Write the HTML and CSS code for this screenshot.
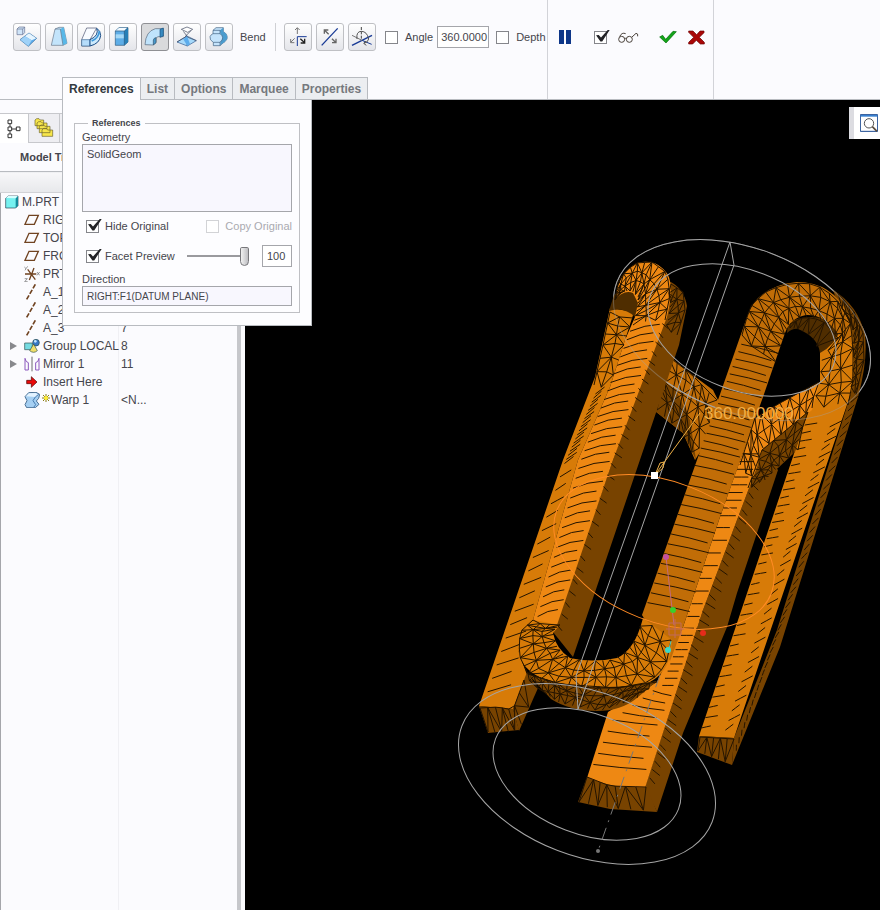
FILE: index.html
```html
<!DOCTYPE html>
<html lang="en">
<head>
<meta charset="utf-8">
<title>Warp – M.PRT</title>
<link rel="stylesheet" href="styles.css">
</head>
<body>
<header class="ribbon">
  <div class="dash">
    <div class="tools">
      <button class="tool" aria-label="Transform"><svg viewBox="0 0 84 84"><path d="M12 18l6-6h17v17l-6 6H12z" fill="#cfe4f8" stroke="#667090" stroke-width="2"/><path d="M12 18h17v17M29 18l6-6" fill="none" stroke="#667090" stroke-width="2"/><path d="M21 50l27-20 23 16-25 24z" fill="#5cacec" stroke="#336a9c" stroke-width="2"/><path d="M48 31l22 15-14 6-20-12z" fill="#e6f5ff"/><path d="M22 50l14-10 20 12-10 17z" fill="#9fd2f8"/></svg></button>
      <button class="tool" aria-label="Warp"><svg viewBox="0 0 84 84"><path d="M19 67l11-49 12-5h14l10 48-12 6z" fill="#c3e4fb" stroke="#657488" stroke-width="2"/><path d="M46 18l10-5 10 48-12 6z" fill="#58b8e8"/><path d="M30 18h16l8 49" fill="none" stroke="#657488" stroke-width="2"/></svg></button>
      <button class="tool" aria-label="Spine"><svg viewBox="0 0 84 84"><path d="M14 50l15-35h30l-20 35v19H14z" fill="#f8fbff" stroke="#454d6b" stroke-width="2"/><path d="M14 50h25v19H14z" fill="#b5dcfa" stroke="#3d6693" stroke-width="2"/><path d="M39 50q28-12 20-34 12 6 12 22-3 24-32 31z" fill="#cdeafc" stroke="#184b86" stroke-width="3"/><path d="M44 54q22-9 23-30" stroke="#3a96da" stroke-width="5" fill="none"/></svg></button>
      <button class="tool" aria-label="Stretch"><svg viewBox="0 0 84 84"><path d="M19 24l11-10h27v43L46 67H19z" fill="#5dade7" stroke="#28577d" stroke-width="2"/><path d="M20 23l10-8h25l-9 9z" fill="#f3faff"/><path d="M20 34h26v12H20z" fill="#a5d9f7"/><path d="M46 24l11-10v43L46 67z" fill="#267fb7"/><path d="M19 24h27v43M46 24l11-10" fill="none" stroke="#28577d" stroke-width="2"/></svg></button>
      <button class="tool pressed" aria-label="Bend"><svg viewBox="0 0 84 84"><path d="M12 65q2-40 31-48h24v24H51l-6 4v14l-9 7z" fill="#bfe3fb" stroke="#536477" stroke-width="2"/><path d="M57 19l10-4v24l-10 4z" fill="#388bc1" stroke="#16507f" stroke-width="2"/><path d="M37 66V51q2-7 8-7v15z" fill="#4699cb" stroke="#31516b" stroke-width="2"/></svg></button>
      <button class="tool" aria-label="Twist"><svg viewBox="0 0 84 84"><path d="M12 57l30-18 28 14-27 16z" fill="#a6d9fa" stroke="#31588e" stroke-width="2"/><path d="M25 19l17-7 17 7-15 9z" fill="#fff" stroke="#3d455e" stroke-width="2"/><path d="M31 25l13 17M54 23L38 39M42 42l28 11M42 39L12 57M38 39l5 30" fill="none" stroke="#3d455e" stroke-width="2"/><path d="M31 49l11-10 9 24-8 6z" fill="#5cacec"/></svg></button>
      <button class="tool" aria-label="Sculpt"><svg viewBox="0 0 84 84"><path d="M24 22l9-8h22v12q14 7 11 22-6 10-12 12l-9 8H25V58q-12-7-10-17 3-7 9-9z" fill="#c4e3fb" stroke="#3d5d7e" stroke-width="2"/><path d="M45 22l10-8v12q14 7 11 22-7 10-12 12l-8 7V56q14-13 0-24z" fill="#4b9cce"/><path d="M24 22h21v10q16 12 0 26v10M24 32h21M25 58h20" fill="none" stroke="#3d5d7e" stroke-width="2"/></svg></button>
      <span class="mode">Bend</span>
      <span class="rule"></span>
      <button class="tool" aria-label="Start frame"><svg viewBox="0 0 84 84" fill="none" stroke-width="3"><path d="M40 33V15M33 21l7-7 7 7M32 46L20 58M20 48v11h11" stroke="#777"/><path d="M40 69V41h28" stroke="#173995"/><path d="M49 47l13 12M62 47v13H50" stroke="#222" stroke-width="4"/></svg></button>
      <button class="tool" aria-label="Reverse direction"><svg viewBox="0 0 84 84" fill="none"><path d="M17 67L65 16" stroke="#173995" stroke-width="4"/><path d="M38 34L25 21M25 32V21h12M48 47l12 12M60 47v12H48" stroke="#666" stroke-width="4"/></svg></button>
      <button class="tool" aria-label="Rotate axis"><svg viewBox="0 0 84 84" fill="none"><path d="M12 67l60-30" stroke="#173995" stroke-width="4"/><path d="M12 37l30 15" stroke="#777" stroke-width="3"/><path d="M42 52l29 12" stroke="#173995" stroke-width="3"/><path d="M40 12v38" stroke="#444" stroke-width="3" stroke-dasharray="9 4"/><path d="M27 48q-3-23 13-23 17 0 22 23-3 11-14 13M54 54l-7 7 8 6" stroke="#555" stroke-width="3"/></svg></button>
      <label class="opt angle"><input type="checkbox" class="tick"><span>Angle</span></label>
      <input class="num" type="text" value="360.0000" aria-label="Angle value">
      <label class="opt depth"><input type="checkbox" class="tick"><span>Depth</span></label>
    </div>
    <nav class="tabs" aria-label="Dashboard">
      <button class="tab current">References</button><button class="tab">List</button><button class="tab">Options</button><button class="tab">Marquee</button><button class="tab">Properties</button>
    </nav>
  </div>
  <div class="finish">
    <button class="plain pause" aria-label="Pause"><svg width="12" height="14" viewBox="0 0 12 14"><path d="M0 0h5v14H0zM7 0h5v14H7z" fill="#0d3688"/></svg></button>
    <label class="opt preview"><input type="checkbox" class="tick" checked aria-label="Preview"><svg width="21" height="13" viewBox="0 0 63 39" fill="none" stroke="#49413a" stroke-width="3"><circle cx="11" cy="25" r="9"/><circle cx="34" cy="25" r="9"/><path d="M20 24q3-4 5 0M5 17q6-14 18-9M42 18L54 7q7 0 5 9"/></svg></label>
    <button class="plain accept" aria-label="Accept"><svg width="18" height="14" viewBox="0 0 54 42"><path d="M2 21l9-5 9 12L42 4l10 1-31 34z" fill="#13a519" stroke="#056b0b" stroke-width="2"/></svg></button>
    <button class="plain" aria-label="Cancel"><svg width="17" height="15" viewBox="0 0 51 45"><path d="M2 3h13l11 11L36 3h12v5L34 22l15 15v5H37L25 31 14 42H2v-5l15-15L2 7z" fill="#a90707" stroke="#690202" stroke-width="2"/></svg></button>
  </div>
  <div class="spare"></div>
</header>

<main class="work">
  <aside class="side">
    <div class="side-tabs">
      <button class="side-tab on" aria-label="Model tree"><svg width="14" height="20" viewBox="0 0 42 60" fill="none" stroke="#333" stroke-width="3"><path d="M3 3h11v11H3zM3 24h11v11H3zM3 45h11v11H3zM28 24h11v11H28zM9 14v10M9 35v10M14 30h14"/></svg></button>
      <button class="side-tab" aria-label="Folders"><svg width="20" height="20" viewBox="0 0 60 60" fill="#f7e64a" stroke="#69602a" stroke-width="2"><path d="M3 23V6l5-4h7l4 4h10v17zM9 32V15l5-4h7l4 4h14v17zM16 44V25l5-4h8l4 4h15v19zM24 55V36l5-5h8l4 5h15v19z"/></svg></button>
      <button class="side-tab" aria-label="Favorites"></button>
    </div>
    <h2 class="side-title">Model Tree</h2>
    <table class="tree">
      <thead><tr><th></th><th></th></tr></thead>
      <tbody>
        <tr><td><div class="node root"><svg class="ic" viewBox="0 0 48 48"><path d="M5 13l7-7h30v29l-7 7H5z" fill="#76f1f0" stroke="#263f52" stroke-width="2"/><path d="M35 13l7-7v29l-7 7z" fill="#148b9c"/><path d="M6 12l6-6h29l-6 7z" fill="#d5ffff"/></svg>M.PRT</div></td><td></td></tr>
        <tr><td><div class="node"><svg class="ic" viewBox="0 0 48 48"><path d="M3 37L15 10h28L31 37z" fill="none" stroke="#704321" stroke-width="4"/></svg>RIGHT</div></td><td></td></tr>
        <tr><td><div class="node"><svg class="ic" viewBox="0 0 48 48"><path d="M3 37L15 10h28L31 37z" fill="none" stroke="#704321" stroke-width="4"/></svg>TOP</div></td><td></td></tr>
        <tr><td><div class="node"><svg class="ic" viewBox="0 0 48 48"><path d="M3 37L15 10h28L31 37z" fill="none" stroke="#704321" stroke-width="4"/></svg>FRONT</div></td><td></td></tr>
        <tr><td><div class="node"><svg class="ic" viewBox="0 0 48 48" fill="none" stroke="#704321" stroke-width="4"><path d="M3 24h34M11 10l23 31M30 6L16 42"/><path d="M1 3l5 5 5-7M6 8l-3 5M2 38h8l-8 9h9M39 18l8 10M47 18l-8 10" stroke="#666" stroke-width="2"/></svg>PRT</div></td><td></td></tr>
        <tr><td><div class="node"><svg class="ic" viewBox="0 0 48 48"><path d="M8 46L34 1" stroke="#704321" stroke-width="5" stroke-dasharray="14 5"/></svg>A_1</div></td><td></td></tr>
        <tr><td><div class="node"><svg class="ic" viewBox="0 0 48 48"><path d="M8 46L34 1" stroke="#704321" stroke-width="5" stroke-dasharray="14 5"/></svg>A_2</div></td><td></td></tr>
        <tr><td><div class="node"><svg class="ic" viewBox="0 0 48 48"><path d="M8 46L34 1" stroke="#704321" stroke-width="5" stroke-dasharray="14 5"/></svg>A_3</div></td><td>7</td></tr>
        <tr><td><div class="node parent"><svg class="ic" viewBox="0 0 48 48" stroke="#2d4e4b" stroke-width="2"><path d="M2 15h23v20H2z" fill="#76dce2"/><circle cx="36" cy="14" r="10" fill="#3778c7"/><circle cx="34" cy="10" r="4" fill="#c4e7ff" stroke="none"/><path d="M17 38l12-20 11 20q-11 10-23 0z" fill="#f0df69"/></svg>Group LOCAL</div></td><td>8</td></tr>
        <tr><td><div class="node parent"><svg class="ic" viewBox="0 0 48 48" fill="none" stroke="#8b58bd" stroke-width="3"><path d="M3 42V7q2 12 10 13v22zM45 42V7q-2 12-10 13v22z"/><path d="M24 2v44" stroke="#222" stroke-width="2"/></svg>Mirror 1</div></td><td>11</td></tr>
        <tr><td><div class="node"><svg class="ic" viewBox="0 0 48 48"><path d="M8 19h14V8l17 16-17 16V29H8z" fill="#e90909" stroke="#4a0000" stroke-width="2"/></svg>Insert Here</div></td><td></td></tr>
        <tr><td><div class="node"><svg class="ic" viewBox="0 0 48 48"><path d="M3 14L14 2l22-1 11 6-3 12-7 8 8 10-11 10H8l-5-9 6-12z" fill="#a5cff2" stroke="#4c7195" stroke-width="3"/><path d="M6 13l9-9 20-1 8 5-9 7z" fill="#e3f3ff"/><path d="M34 15l-7 11 8 12-6 8M34 15l10-8" fill="none" stroke="#467bb0" stroke-width="3"/></svg><svg class="star" viewBox="0 0 24 24"><path d="M12 0v24M0 12h24M3 3l18 18M21 3L3 21" stroke="#8a7b10" stroke-width="3"/><circle cx="12" cy="12" r="6" fill="#ffee35"/></svg>Warp 1</div></td><td>&lt;N...</td></tr>
      </tbody>
    </table>
  </aside>

  <section class="canvas" aria-label="Graphics">
    <svg class="model" viewBox="245 100 635 810" preserveAspectRatio="xMinYMin slice">
      <!-- back links between the loops -->
      <path class="f3" d="M655 345L690 373 713 390 719 402 708 440 695 460 683 433 655 411z"/>
      <path class="f4" d="M658 380L676 390 690 420 696 460 683 433 655 411z"/>
      <g id="back-lines"></g>
      <ellipse class="wire" cx="742" cy="330" rx="134" ry="82" transform="rotate(21 742 330)"/>
      <!-- right loop -->
      <path class="f4" d="M833 290Q858 305 865 335 868 360 858 397L780 647 732 765 734 738 777 630 852 390 854 350z"/>
      <path class="f5" d="M788 323Q806 312 832 321L853 363 820 377 820 353Q818 337 798 329 793 328 787 333z"/>
      <path class="f2" d="M840 312Q854 338 854 363L852 390 734 738 699 736 808 412 820 382 820 353Q835 345 840 330z"/>
      <path class="f1" d="M820 382L780 403 755 418 732 490 747 488 762 450 780 436 812 410z"/>
      <path class="f4" d="M808 412L762 450 747 490 757 484 778 468 795 452z"/>
      <path class="f4" d="M699 736L734 738 732 765 697 752z"/>
      <!-- left loop -->
      <path class="f4" d="M669 281Q684 288 687 306L679 345 573 657 553 632 613 460 668 302z"/>
      <path class="f2" d="M610 308L634 312 625 340 610 387 578 460 533 620 518 650 527 675 513 709 479 706 563 460 595 377z"/>
      <path class="f5" d="M609 311L614 295 625 288 638 294 640 303 635 317Q624 306 609 311z"/>
      <path class="f1" d="M615 300Q618 273 637 263 657 258 668 275 674 287 667 317L613 460 557 625 518 650 533 620 578 460 610 387 625 340 635 317 638 303 633 293Q624 289 615 300z"/>
      <path class="f4" d="M513 709L527 672 538 688 519 731z"/>
      <path class="f4" d="M479 706L513 709 519 730 488 733z"/>
      <!-- centre bar -->
      <path class="f4" d="M762 450L778 470 737 593 727 627 683 733 657 812 645 787 703 610 757 467z"/>
      <path class="f1" d="M755 418L762 450 757 467 703 610 645 788 610 787 587 778 608 712 657 682 683 627 720 517z"/>
      <path class="f3" d="M747 317Q757 286 797 282 832 282 848 314L854 345 838 334Q825 314 806 315 790 318 785 333L763 397 720 517 683 627 670 661 642 615 697 460z"/>
      <path class="f4" d="M587 777Q610 789 647 787L657 812 610 809 578 802z"/>
      <!-- lower loop -->
      <path class="f4" d="M528 674L560 684 617 688 657 681 637 698Q621 711 597 711 570 711 551 699z"/>
      <path class="f2" d="M518 650Q519 625 533 620L560 625 553 633Q556 649 570 658 592 663 617 658 635 650 643 618L672 640Q672 670 650 682 617 691 560 684 522 676 518 650z"/>
      <g id="lines"></g>
      <!-- reference wires -->
      <ellipse class="wire hidden-part" cx="742" cy="330" rx="134" ry="82" transform="rotate(21 742 330)"/>
      <ellipse class="wire" cx="742" cy="330" rx="98" ry="60" transform="rotate(21 742 330)"/>
      <ellipse class="wire" cx="587" cy="774" rx="134" ry="82" transform="rotate(21 587 774)"/>
      <ellipse class="wire" cx="587" cy="774" rx="98" ry="60" transform="rotate(21 587 774)"/>
      <path class="wire" d="M734 265L730 242 576 676 578 709z"/>
      <ellipse class="spin" cx="664" cy="552" rx="115" ry="70" transform="rotate(21 664 552)"/>
      <path class="wire axis" d="M660 675L598 851"/><circle cx="598" cy="851" r="2" fill="#777"/>
      <path d="M666 557L674 625" stroke="#c16a7d" fill="none"/><circle cx="666" cy="557" r="3" fill="#c451a0"/>
      <circle cx="673" cy="610" r="3" fill="#39d02c"/><path d="M669 623h12v12h-12zM675 619v19M666 629h18" stroke="#c16a5d" fill="none"/>
      <circle cx="703" cy="633" r="3" fill="#e72b1b"/><path d="M671 641l-2 8" stroke="#57d6c8"/><circle cx="668" cy="650" r="3" fill="#39d8ca"/>
      <path d="M700 413L655 475M655 475l5-12 4-1-1 6z" stroke="#eeb046" fill="none"/>
      <path d="M651 472h7v7h-7z" fill="#fff"/>
      <text class="dim" x="704" y="419">360.000000</text>
    </svg>
    <button class="zoomer" aria-label="Refit"><svg width="18" height="18" viewBox="0 0 54 54" fill="none"><path d="M1 2h52v50H1z" stroke="#18468f" stroke-width="3"/><path d="M2 3h50v5H2z" fill="#3980cf"/><circle cx="27" cy="28" r="14" stroke="#555" stroke-width="3" fill="#fff"/><path d="M37 38l14 14" stroke="#594b3c" stroke-width="5"/></svg></button>
  </section>

  <form class="panel">
    <fieldset>
      <legend>References</legend>
      <label for="geom">Geometry</label>
      <textarea id="geom" class="field geom">SolidGeom</textarea>
      <div class="line"><label class="opt"><input type="checkbox" class="tick" checked><span>Hide Original</span></label><label class="opt off"><input type="checkbox" class="tick" disabled><span>Copy Original</span></label></div>
      <div class="line facet"><label class="opt"><input type="checkbox" class="tick" checked><span>Facet Preview</span></label><input class="slider" type="range" min="0" max="100" value="100" aria-label="Facet quality"><input class="num pct" type="text" value="100" aria-label="Facet value"></div>
      <label for="dir">Direction</label>
      <input id="dir" class="field dir" type="text" value="RIGHT:F1(DATUM PLANE)">
    </fieldset>
  </form>
</main>
<script src="script.js"></script>
</body>
</html>
```
FILE: styles.css
```css
* { box-sizing: border-box; }
body { margin: 0; min-height: 100vh; display: grid; grid-template-rows: 100px 1fr; background: #fbfbfe; color: #45454c; font: 11px/14px "Liberation Sans", Arial, sans-serif; overflow: hidden; }
button, input, textarea { font: inherit; color: inherit; margin: 0; padding: 0; }
button { border: 0; background: none; }
svg { display: block; }

.ribbon { display: flex; border-bottom: 1px solid #b8bbc0; background: #fbfbfe; }
.dash { width: 548px; display: flex; flex-direction: column; justify-content: space-between; border-right: 1px solid #d2d3d8; padding-top: 23px; }
.tools { display: flex; align-items: center; gap: 4px; padding-left: 13px; height: 28px; }
.tool { width: 28px; height: 28px; flex: none; border: 1px solid #bfc0c4; border-radius: 3px; background: linear-gradient(#fff, #e4e5ea); }
.tool svg { width: 28px; height: 28px; margin: -1px; }
.tool.pressed { background: #d9dadc; border-color: #8f9094; }
.mode { margin-left: 3px; width: 31px; }
.rule { width: 1px; height: 28px; background: #cfd0d4; margin-right: 4px; }
.opt { display: flex; align-items: center; gap: 6px; white-space: nowrap; }
.angle { margin-left: 5px; gap: 7px; }
.depth { margin-left: 3px; gap: 7px; }
.num { width: 52px; height: 22px; border: 1px solid #a5a6ab; background: #fff; padding: 0 0 0 3px; }
.tick { appearance: none; position: relative; width: 13px; height: 13px; flex: none; border: 1px solid #85868b; background: #fff; }
.tick:checked::after { content: ""; position: absolute; left: 0; top: -2px; width: 15px; height: 13px; background: #222226; clip-path: polygon(7% 45%, 25% 42%, 40% 62%, 88% 0, 100% 0, 48% 92%, 36% 92%); }
.tick:disabled { border-color: #d2d3d6; }
.off { color: #aaaab0; }

.tabs { display: flex; padding-left: 62px; }
.tab { height: 22px; padding: 0 6px; border: 1px solid #b8bbc0; border-bottom: 0; border-left-width: 0; background: #eceef1; color: #75787d; font-size: 12px; font-weight: bold; }
.tab.current { border-left-width: 1px; background: #fdfdff; color: #333a40; margin-bottom: -1px; height: 23px; }

.finish { width: 166px; border-right: 1px solid #d2d3d8; display: flex; align-items: center; padding: 0 0 25px 11px; }
.pause { margin-right: 23px; }
.preview { gap: 11px; }
.accept { margin: 0 11px 0 20px; }
.spare { flex: 1; }

.work { position: relative; display: grid; grid-template-columns: 245px 1fr; }
.side { padding: 13px 4px 0 0; overflow: hidden; display: flex; flex-direction: column; background: linear-gradient(#c6c7cb, #c6c7cb) 237px 72px / 4px 100% no-repeat, linear-gradient(#a5a6ab, #a5a6ab) 0 72px / 1px 100% no-repeat, linear-gradient(#f0f0f4, #f0f0f4) 118px 93px / 1px 100% no-repeat, #fbfbfe; }
.side-tabs { display: flex; border-top: 1px solid #c7c8cc; }
.side-tab { width: 31px; height: 29px; display: grid; place-items: center; border-right: 1px solid #c7c8cc; border-bottom: 1px solid #c7c8cc; background: #eeeef2; }
.side-tab.on { width: 29px; background: #fff; border-bottom: 0; }
.side-title { margin: 7px 0 7px 20px; font: bold 11px/14px "Liberation Sans", Arial, sans-serif; }
.tree { border-collapse: collapse; width: 238px; table-layout: fixed; font-size: 12px; line-height: 18px; }
.tree th { height: 21px; padding: 0; border-top: 1px solid #b8bbc0; border-bottom: 1px solid #d1d2d6; background: linear-gradient(#f7f7f9, #e7e8eb); }
.tree th:first-child { width: 118px; }
.tree td { height: 18px; padding: 0 0 0 3px; white-space: nowrap; }
.tree td:first-child { padding: 0; }
.node { display: flex; align-items: center; gap: 3px; padding-left: 24px; height: 18px; }
.root { padding-left: 4px; gap: 2px; }
.parent { padding-left: 10px; gap: 3px; }
.parent::before { content: ""; border-left: 7px solid #88898d; border-top: 4px solid transparent; border-bottom: 4px solid transparent; margin-right: 4px; }
.ic { width: 16px; height: 16px; flex: none; }
.star { width: 8px; height: 8px; flex: none; margin: 0 -2px 4px -1px; }

.canvas { position: relative; background: #000; overflow: hidden; }
.model { position: absolute; inset: 0; width: 100%; height: 100%; }
.f1 { fill: #ee8813; } .f2 { fill: #d77b08; } .f3 { fill: #c16d07; } .f4 { fill: #784300; } .f5 { fill: #4f2d00; }
.wire { fill: none; stroke: #a5a5a5; stroke-width: 1; }
.hidden-part { opacity: .4; }
.axis { stroke: #777; stroke-dasharray: 13 6 2 6; }
.spin { fill: none; stroke: #ff8b25; }
.seam { fill: none; stroke: #241400; stroke-width: 1; }
.dim { fill: #f0ae48; font: 17px "Liberation Sans", Arial, sans-serif; }
.zoomer { position: absolute; top: 7px; right: 0; width: 31px; height: 32px; background: #fff; border-left: 5px solid #dcdce1; display: flex; align-items: center; justify-content: flex-end; padding-right: 2px; }

.panel { position: absolute; left: 62px; top: 0; width: 250px; height: 226px; padding: 16px 11px 12px; background: #fdfdff; border: 1px solid #b8bbc0; border-top: 0; }
.panel fieldset { margin: 0; padding: 0 7px 6px; border: 1px solid #bfc0c4; width: 226px; }
.panel legend { font-size: 9px; font-weight: bold; margin-left: 6px; padding: 0 4px; line-height: 14px; }
.panel label { display: block; }
.panel .opt { display: flex; }
.field { display: block; width: 210px; border: 1px solid #a5a6ab; background: #f8f7fe; resize: none; border-radius: 0; }
.geom { height: 68px; padding: 2px 4px; }
.dir { height: 20px; padding: 0 4px; font-size: 10px; }
.line { display: flex; justify-content: space-between; align-items: center; height: 28px; padding-left: 4px; }
.facet { height: 32px; }
.slider { appearance: none; width: 62px; height: 20px; background: linear-gradient(#9a9a9e, #9a9a9e) 0 9px / 100% 2px no-repeat; }
.slider::-webkit-slider-thumb { appearance: none; width: 9px; height: 19px; border: 1px solid #77777b; border-radius: 2px 2px 5px 5px; background: linear-gradient(90deg, #f1f1f1, #bebec2); }
.pct { width: 30px; padding: 0 4px; }
```
FILE: script.js
```js
// Facet edges: bands are ruled with short strokes, bends with a triangle grid.
const NS = "http://www.w3.org/2000/svg";
function along(pts, t) {
  const s = Math.min(Math.max(t, 0), 1) * (pts.length - 1);
  const i = Math.min(Math.floor(s), pts.length - 2), f = s - i;
  return [pts[i][0] + (pts[i + 1][0] - pts[i][0]) * f, pts[i][1] + (pts[i + 1][1] - pts[i][1]) * f];
}
function draw(id, d) {
  const p = document.createElementNS(NS, "path");
  p.setAttribute("class", "seam");
  p.setAttribute("d", d);
  document.getElementById(id).appendChild(p);
}
function band(a, b, n, from, to, lift, bow) {
  let d = "";
  for (let i = 0; i < n; i++) {
    const t = (i + 0.5) / n, p = along(a, t), q = along(b, t);
    const end = to - (i % 2) * 0.1;
    const x1 = p[0] + (q[0] - p[0]) * from, x2 = p[0] + (q[0] - p[0]) * end;
    const y = p[1] + (q[1] - p[1]) * 0.5;
    d += `M${x1} ${y + lift / 2}Q${(x1 + x2) / 2} ${y + bow} ${x2} ${y - lift / 2}`;
  }
  draw("lines", d);
}
function mesh(id, a, b, n, m) {
  const g = [];
  for (let i = 0; i <= n; i++) {
    const row = [], p = along(a, i / n), q = along(b, i / n);
    for (let j = 0; j <= m; j++) {
      const k = j > 0 && j < m ? Math.sin(i * 7 + j * 5) * 2 : 0, f = j / m;
      row.push([p[0] + (q[0] - p[0]) * f + k, p[1] + (q[1] - p[1]) * f - k]);
    }
    g.push(row);
  }
  let d = "";
  const seg = (u, v) => { d += `M${u}L${v}`; };
  for (let i = 0; i < n; i++) for (let j = 0; j < m; j++) {
    seg(g[i][j], g[i + 1][j]);
    seg(g[i][j], g[i][j + 1]);
    if ((i + j) % 2) seg(g[i][j], g[i + 1][j + 1]); else seg(g[i + 1][j], g[i][j + 1]);
  }
  draw(id, d);
}
// left leg
band([[630, 325], [578, 460], [535, 618]], [[663, 322], [613, 460], [560, 618]], 32, 0.05, 0.95, 7, -3);
band([[595, 385], [563, 460], [482, 700]], [[608, 392], [578, 460], [516, 690]], 35, 0.1, 0.8, 7, 0);
band([[664, 318], [613, 460], [556, 628]], [[684, 325], [637, 460], [576, 640]], 30, 0, 0.3, -5, 0);
// centre bar
band([[742, 340], [697, 460], [645, 612]], [[780, 350], [738, 460], [689, 612]], 31, 0.02, 0.98, -9, -1);
band([[744, 450], [720, 517], [684, 627], [661, 683]], [[762, 450], [737, 517], [697, 627], [675, 695]], 26, 0, 0.9, 0, 0);
band([[657, 684], [610, 715], [588, 770]], [[674, 695], [660, 730], [648, 775]], 9, 0.05, 0.95, -5, 1);
band([[760, 462], [697, 627], [648, 785]], [[777, 470], [727, 627], [670, 785]], 38, 0.02, 0.35, -6, 0);
// right leg
band([[806, 420], [760, 558], [700, 732]], [[842, 420], [793, 558], [736, 732]], 34, 0, 0.35, 2, 0);
band([[806, 420], [760, 558], [700, 732]], [[844, 420], [793, 558], [736, 732]], 36, 0.66, 0.98, 6, 0);
band([[852, 395], [792, 584], [735, 745]], [[860, 395], [798, 588], [735, 758]], 44, 0, 0.9, 6, 0);
// bends
mesh("back-lines", [[660, 350], [690, 373], [717, 400]], [[657, 410], [683, 433], [695, 460]], 7, 5);
mesh("lines", [[742, 335], [747, 317], [752, 304], [768, 290], [792, 283], [815, 284], [835, 297], [850, 320], [853, 345], [853, 380], [848, 405]], [[776, 362], [781, 345], [785, 333], [789, 323], [802, 316], [818, 318], [830, 326], [838, 338], [822, 358], [820, 382], [812, 408]], 21, 3);
mesh("lines", [[838, 293], [854, 312], [863, 333], [864, 360], [856, 395]], [[850, 320], [853, 330], [854, 350], [853, 370], [850, 395]], 12, 2);
mesh("lines", [[790, 324], [804, 317], [822, 320], [838, 338]], [[790, 328], [799, 329], [812, 337], [820, 353]], 7, 1);
mesh("lines", [[819, 382], [780, 403], [755, 418], [740, 465]], [[812, 408], [787, 430], [763, 448], [748, 485]], 12, 2);
mesh("lines", [[808, 412], [762, 450], [748, 488]], [[798, 450], [779, 466], [765, 480]], 8, 3);
mesh("lines", [[615, 300], [619, 278], [635, 263], [652, 262], [667, 273], [670, 295], [665, 320]], [[622, 292], [625, 291], [632, 291], [638, 297], [638, 304], [636, 314], [633, 325]], 14, 3);
mesh("lines", [[671, 284], [683, 292], [685, 310], [677, 335]], [[671, 298], [670, 307], [668, 320], [665, 330]], 6, 2);
mesh("lines", [[610, 312], [603, 345], [594, 385]], [[633, 318], [624, 345], [608, 390]], 6, 2);
mesh("lines", [[533, 620], [520, 632], [519, 655], [528, 674], [560, 684], [590, 688], [617, 688], [650, 682], [666, 665], [671, 640]], [[560, 625], [554, 630], [556, 645], [563, 654], [574, 659], [593, 661], [610, 660], [627, 651], [636, 637], [643, 618]], 21, 3);
mesh("lines", [[528, 674], [560, 684], [617, 688], [657, 682]], [[538, 688], [560, 703], [600, 711], [637, 698]], 16, 3);
mesh("lines", [[480, 708], [498, 707], [513, 710], [524, 680]], [[488, 732], [504, 732], [519, 730], [536, 690]], 7, 1);
mesh("lines", [[587, 777], [610, 786], [646, 787]], [[579, 802], [612, 808], [656, 811]], 7, 1);
mesh("lines", [[700, 737], [717, 738], [734, 739]], [[698, 751], [715, 758], [732, 764]], 5, 1);
```
